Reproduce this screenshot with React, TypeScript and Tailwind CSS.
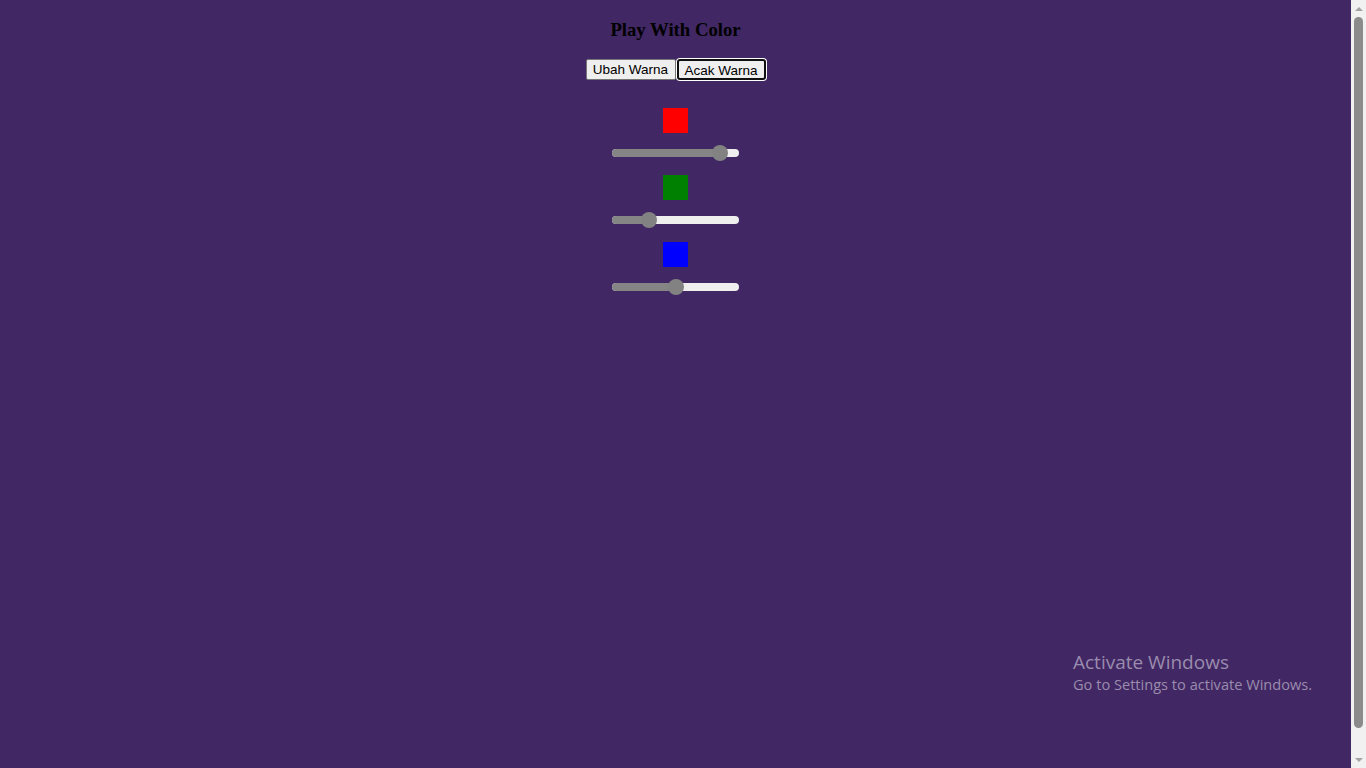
import { useState } from 'react';

const channels = [
  { key: 'r', swatch: 'bg-[#ff0000]', value: 230 },
  { key: 'g', swatch: 'bg-[#008000]', value: 67 },
  { key: 'b', swatch: 'bg-[#0000ff]', value: 128 },
];

function Slider({ value }: { value: number }) {
  // thumb travels between 8px and width-8px
  const pct = value / 255;
  return (
    <div className="relative h-4 w-[127px]">
      <div className="absolute left-0 right-0 top-1 h-2 rounded-full bg-[#efefef]" />
      <div
        className="absolute left-0 top-1 h-2 rounded-full bg-[#858585]"
        style={{ width: `${8 + pct * 111}px` }}
      />
      <div
        className="absolute top-0 h-4 w-4 rounded-full bg-[#828282]"
        style={{ left: `${pct * 111}px` }}
      />
    </div>
  );
}

function FakeScrollbar() {
  return (
    <div className="flex h-full w-[15px] flex-col items-center bg-[#f1f1f1]">
      <div className="flex h-[17px] items-center justify-center">
        <div className="h-0 w-0 border-x-[4px] border-b-[4px] border-x-transparent border-b-[#a3a3a3]" />
      </div>
      <div className="w-[9px] flex-1 pb-[23px]">
        <div className="h-full rounded-full bg-[#8b8b8b]" />
      </div>
      <div className="flex h-[17px] items-center justify-center">
        <div className="h-0 w-0 border-x-[4px] border-t-[4px] border-x-transparent border-t-[#a3a3a3]" />
      </div>
    </div>
  );
}

export default function App() {
  const [vals] = useState(channels);

  return (
    <div className="flex h-[768px] overflow-hidden bg-[#412763] font-['Liberation_Sans',Arial,sans-serif]">
      <div className="relative flex-1">
        <div className="flex flex-col items-center">
          <h3 className="my-[18.72px] font-['Liberation_Serif','Times_New_Roman',serif] text-[18.72px] font-bold leading-[21.5px] text-black">
            Play With Color
          </h3>

          {/* Buttons */}
          <div className="flex items-center">
            <button className="h-[21px] w-[90px] rounded-[2px] border border-[#767676] bg-[#efefef] text-[13.5px] text-black">
              Ubah Warna
            </button>
            <button className="ml-px h-[21px] w-[89px] rounded-[3px] border-2 border-[#101010] bg-[#efefef] text-[13.5px] text-black shadow-[0_0_0_1px_#ffffff]">
              Acak Warna
            </button>
          </div>

          {/* Color channels */}
          <div className="mt-[28px] flex flex-col items-center">
            {vals.map((c) => (
              <div key={c.key} className="flex flex-col items-center pb-[14px]">
                <div className={`h-[25px] w-[25px] ${c.swatch}`} />
                <div className="mt-3">
                  <Slider value={c.value} />
                </div>
              </div>
            ))}
          </div>
        </div>

        {/* OS watermark */}
        <div className="absolute left-[1073px] top-[650px] font-['Open_Sans','Noto_Sans',sans-serif] text-[#9a8cae]">
          <div className="text-[19px] leading-6">Activate Windows</div>
          <div className="text-[14.6px] leading-5">Go to Settings to activate Windows.</div>
        </div>
      </div>
      <FakeScrollbar />
    </div>
  );
}
